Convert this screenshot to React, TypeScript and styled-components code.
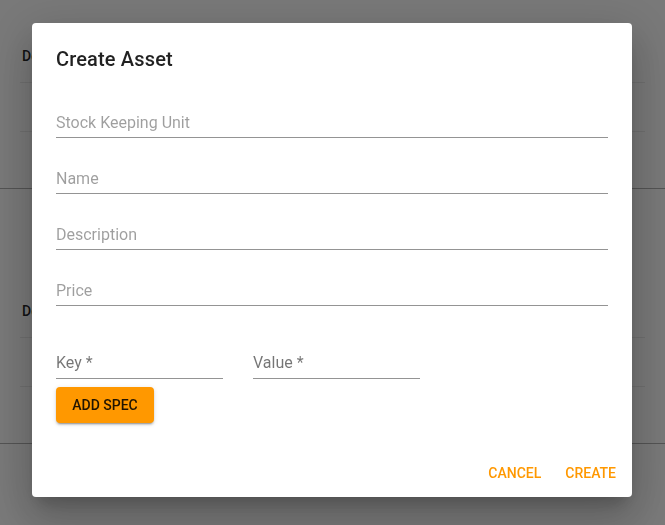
import React from 'react';
import styled, { createGlobalStyle } from 'styled-components';

const GlobalStyle = createGlobalStyle`
  html, body {
    margin: 0;
    padding: 0;
    width: 665px;
    height: 525px;
    overflow: hidden;
    background: #f3f3f3;
    font-family: Roboto, "Liberation Sans", sans-serif;
  }
`;

const Page = styled.div`
  width: 665px;
  height: 525px;
  display: flex;
  flex-direction: column;
`;

const Section = styled.section<{ $top: number }>`
  padding-top: ${(p) => p.$top}px;
  border-bottom: 1px solid #a8a8a8;
`;

const HeaderRow = styled.div`
  height: 48px;
  margin: 0 20px;
  padding: 13px 2px 0;
  box-sizing: border-box;
  border-bottom: 1px solid #e0e0e0;
  font-size: 14px;
  font-weight: 500;
  line-height: 16px;
  color: rgba(0, 0, 0, 0.87);
`;

const BodyRow = styled.div<{ $h: number; $last?: boolean }>`
  height: ${(p) => p.$h}px;
  margin: 0 20px;
  border-bottom: ${(p) => (p.$last ? 'none' : '1px solid #e0e0e0')};
`;

const Backdrop = styled.div`
  position: fixed;
  inset: 0;
  background: rgba(0, 0, 0, 0.5);
  display: flex;
  justify-content: flex-start;
  align-items: flex-start;
  padding: 23px 0 0 32px;
`;

const Dialog = styled.div`
  width: 600px;
  background: #fff;
  border-radius: 4px;
  display: flex;
  flex-direction: column;
  box-shadow: 0px 11px 15px -7px rgba(0, 0, 0, 0.2),
    0px 24px 38px 3px rgba(0, 0, 0, 0.14),
    0px 9px 46px 8px rgba(0, 0, 0, 0.12);
`;

const Title = styled.h2`
  margin: 0;
  padding: 20px 24px 7px;
  font-size: 20px;
  font-weight: 500;
  line-height: 32px;
  letter-spacing: 0.0075em;
  color: rgba(0, 0, 0, 0.87);
`;

const Content = styled.div`
  padding: 0 24px 24px;
  display: flex;
  flex-direction: column;
`;

const Field = styled.div<{ $h?: number }>`
  height: ${(p) => p.$h ?? 56}px;
  display: flex;
  flex-direction: column;
  justify-content: flex-end;
`;

const InputLine = styled.div<{ $gap?: number }>`
  padding-bottom: ${(p) => p.$gap ?? 5}px;
  border-bottom: 1px solid rgba(0, 0, 0, 0.42);
`;

const Placeholder = styled.span<{ $strong?: boolean }>`
  display: block;
  font-size: 16px;
  line-height: 19px;
  color: ${(p) => (p.$strong ? 'rgba(0, 0, 0, 0.54)' : 'rgba(0, 0, 0, 0.38)')};
`;

const SpecRow = styled.div`
  height: 73px;
  display: flex;
  align-items: flex-end;
  gap: 30px;
`;

const SpecField = styled.div`
  width: 167px;
`;

const AddButton = styled.button`
  align-self: flex-start;
  margin-top: 8px;
  height: 36px;
  width: 98px;
  padding: 0;
  border: none;
  border-radius: 4px;
  background: #ff9800;
  color: rgba(0, 0, 0, 0.87);
  font-family: Roboto, "Liberation Sans", sans-serif;
  font-size: 14px;
  font-weight: 500;
  letter-spacing: 0;
  text-transform: uppercase;
  box-shadow: 0px 3px 1px -2px rgba(0, 0, 0, 0.2),
    0px 2px 2px 0px rgba(0, 0, 0, 0.14),
    0px 1px 5px 0px rgba(0, 0, 0, 0.12);
`;

const Actions = styled.div`
  display: flex;
  justify-content: flex-end;
  gap: 8px;
  padding: 8px 8px 6px;
`;

const TextButton = styled.button`
  height: 36px;
  min-width: 64px;
  padding: 0 8px;
  border: none;
  background: transparent;
  color: #ff9800;
  font-family: Roboto, "Liberation Sans", sans-serif;
  font-size: 14px;
  font-weight: 500;
  letter-spacing: 0;
  text-transform: uppercase;
  border-radius: 4px;
`;

const fields = ['Stock Keeping Unit', 'Name', 'Description', 'Price'];

const App = () => {
  return (
    <>
      <GlobalStyle />
      <Page>
        <Section $top={35}>
          <HeaderRow>Desc</HeaderRow>
          <BodyRow $h={48} />
          <BodyRow $h={56} $last />
        </Section>
        <Section $top={101}>
          <HeaderRow>Desc</HeaderRow>
          <BodyRow $h={48} />
          <BodyRow $h={56} $last />
        </Section>
      </Page>
      <Backdrop>
        <Dialog>
          <Title>Create Asset</Title>
          <Content>
            {fields.map((f) => (
              <Field key={f}>
                <InputLine>
                  <Placeholder>{f}</Placeholder>
                </InputLine>
              </Field>
            ))}
            <SpecRow>
              <SpecField>
                <InputLine $gap={6}>
                  <Placeholder $strong>Key *</Placeholder>
                </InputLine>
              </SpecField>
              <SpecField>
                <InputLine $gap={6}>
                  <Placeholder $strong>Value *</Placeholder>
                </InputLine>
              </SpecField>
            </SpecRow>
            <AddButton>Add Spec</AddButton>
          </Content>
          <Actions>
            <TextButton>Cancel</TextButton>
            <TextButton>Create</TextButton>
          </Actions>
        </Dialog>
      </Backdrop>
    </>
  );
};

export default App;
